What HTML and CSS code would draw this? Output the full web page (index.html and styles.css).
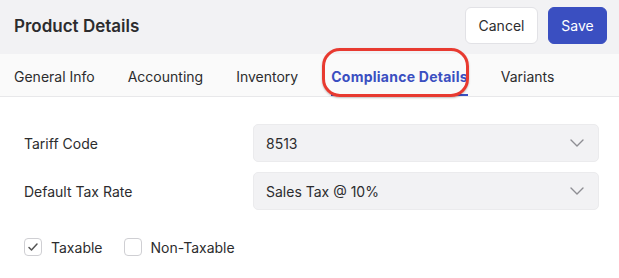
FILE: index.html
```html
<!DOCTYPE html>
<html lang="en">
<head>
    <meta charset="UTF-8">
    <title>Product Details</title>
    <link rel="stylesheet" href="styles.css">
</head>
<body>

<div class="page">
    <div class="header">
        <h1>Product Details</h1>
        <div class="actions">
            <button class="btn">Cancel</button>
            <button class="btn primary">Save</button>
        </div>
    </div>

    <div class="tabs">
        <div class="tab">General Info</div>
        <div class="tab">Accounting</div>
        <div class="tab">Inventory</div>
        <div class="tab active">Compliance Details<span class="callout"></span></div>
        <div class="tab">Variants</div>
    </div>

    <div class="form">
        <div class="row">
            <label>Tariff Code</label>
            <div class="select">
                <span>8513</span>
                <svg width="14" height="8" viewBox="0 0 14 8"><path d="M1 1l6 6 6-6" fill="none" stroke="#8e8e93" stroke-width="1.4" stroke-linecap="round" stroke-linejoin="round"/></svg>
            </div>
        </div>
        <div class="row">
            <label>Default Tax Rate</label>
            <div class="select">
                <span>Sales Tax @ 10%</span>
                <svg width="14" height="8" viewBox="0 0 14 8"><path d="M1 1l6 6 6-6" fill="none" stroke="#8e8e93" stroke-width="1.4" stroke-linecap="round" stroke-linejoin="round"/></svg>
            </div>
        </div>

        <div class="checks">
            <div class="check">
                <span class="box">
                    <svg width="12" height="10" viewBox="0 0 12 10"><path d="M2 5.5l2.5 2.5L10 2" fill="none" stroke="#555" stroke-width="1.5" stroke-linecap="round" stroke-linejoin="round"/></svg>
                </span>
                Taxable
            </div>
            <div class="check">
                <span class="box"></span>
                Non-Taxable
            </div>
        </div>
    </div>
</div>

</body>
</html>
```

FILE: styles.css
```css
body {
    margin: 0;
    font-family: Inter, "Noto Sans", sans-serif;
    color: #2c2c2e;
    background: #fff;
}

.header {
    display: flex;
    align-items: center;
    justify-content: space-between;
    height: 54px;
    padding: 0 12px 0 14px;
    background: #f2f2f4;
    box-sizing: border-box;
}

h1 {
    margin: 0 0 2px;
    font-size: 17px;
    font-weight: 600;
    color: #2c2c2e;
}

.actions {
    display: flex;
    gap: 10px;
    margin-bottom: 3px;
}

.btn {
    width: 73px;
    height: 37px;
    padding: 0;
    font-family: inherit;
    font-size: 14px;
    color: #2c2c2e;
    background: #fff;
    border: 1px solid #e2e2e6;
    border-radius: 6px;
}

.btn.primary {
    width: 59px;
    background: #3a4fc1;
    border-color: #3a4fc1;
    color: #fff;
}

.tabs {
    display: flex;
    height: 43px;
    padding-left: 14px;
    background: #fafafa;
    border-bottom: 1px solid #e8e8ea;
    box-sizing: border-box;
}

.tab {
    position: relative;
    display: flex;
    align-items: center;
    padding-top: 3px;
    margin-right: 33px;
    font-size: 14px;
    color: #2c2c2e;
}

.tab.active {
    font-weight: 700;
    letter-spacing: 0.25px;
    color: #3a4fc1;
    box-shadow: inset 0 -2px 0 #3a4fc1;
}

.callout {
    position: absolute;
    left: -9px;
    right: -1px;
    top: -6px;
    bottom: -1px;
    border: 3px solid #e83a30;
    border-radius: 18px;
    box-shadow: 0 1px 2px rgba(0, 0, 0, 0.25);
}

.form {
    padding: 27px 20px 0 24px;
}

.row {
    display: flex;
    align-items: center;
    margin-bottom: 10px;
}

label {
    width: 229px;
    font-size: 14px;
}

.select {
    flex: 1;
    display: flex;
    align-items: center;
    justify-content: space-between;
    height: 38px;
    padding: 0 14px 0 12px;
    font-size: 14px;
    background: #f2f2f4;
    border: 1px solid #ebebed;
    border-radius: 5px;
    box-sizing: border-box;
}

.checks {
    display: flex;
    gap: 21px;
    margin-top: 28px;
}

.check {
    display: flex;
    align-items: center;
    gap: 9px;
    font-size: 14px;
}

.box {
    display: flex;
    align-items: center;
    justify-content: center;
    width: 18px;
    height: 18px;
    border: 1px solid #cfcfd3;
    border-radius: 4px;
    box-sizing: border-box;
}
```
